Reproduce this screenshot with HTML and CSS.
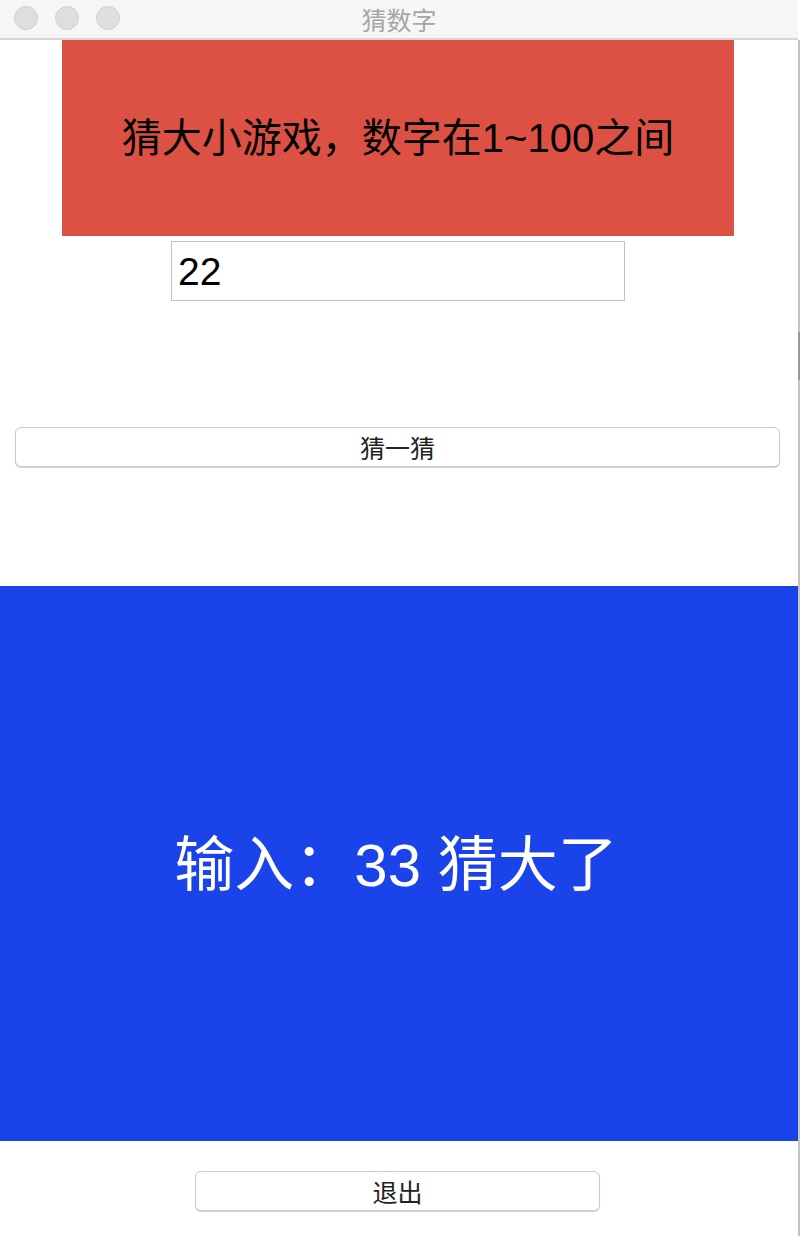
FILE: index.html
```html
<!DOCTYPE html>
<html lang="zh-CN">
<head>
<meta charset="utf-8">
<title>猜数字</title>
<link rel="stylesheet" href="styles.css">
</head>
<body>
<div class="window">
  <header class="titlebar">
    <div class="lights">
      <span class="light"></span>
      <span class="light"></span>
      <span class="light"></span>
    </div>
    <div class="title">猜数字</div>
  </header>
  <main class="content">
    <div class="banner">猜大小游戏，数字在1~100之间</div>
    <input class="guess-input" type="text" value="22">
    <button class="btn btn-guess">猜一猜</button>
    <div class="result">输入：33 猜大了</div>
    <button class="btn btn-quit">退出</button>
    <div class="scroll-thumb"></div>
  </main>
</div>
</body>
</html>
```
FILE: styles.css
```css
html, body {
  margin: 0;
  padding: 0;
  background: #ffffff;
}
body {
  width: 800px;
  height: 1236px;
  overflow: hidden;
  font-family: "Liberation Sans", "Noto Sans CJK SC", sans-serif;
}
.window {
  width: 800px;
  height: 1236px;
  display: flex;
  flex-direction: column;
}
.titlebar {
  height: 38px;
  background: #f6f6f6;
  border-bottom: 2px solid #d6d6d6;
  position: relative;
  display: flex;
  align-items: center;
  justify-content: center;
  margin-right: 2px;
}
.lights {
  position: absolute;
  left: 14px;
  top: 6px;
  display: flex;
  gap: 17px;
}
.light {
  width: 22px;
  height: 22px;
  border-radius: 50%;
  background: #dedede;
  border: 1px solid #d0d0d0;
}
.title {
  font-family: "Noto Sans CJK SC", sans-serif;
  font-size: 25px;
  color: #a6a6a6;
  line-height: 38px;
  margin-top: -1px;
}
.content {
  flex: 1;
  position: relative;
  display: flex;
  flex-direction: column;
  align-items: flex-start;
  border-right: 2px solid #c4c4c4;
}
.banner {
  margin-left: 62px;
  width: 672px;
  height: 196px;
  box-sizing: border-box;
  padding-bottom: 6px;
  background: #dc5143;
  color: #000;
  font-family: "Liberation Sans", "Noto Sans CJK SC", sans-serif;
  font-size: 40px;
  display: flex;
  align-items: center;
  justify-content: center;
}
.guess-input {
  margin: 5px 0 0 171px;
  box-sizing: border-box;
  width: 454px;
  height: 60px;
  border: 1px solid #c2c2c2;
  padding: 2px 6px 0 6px;
  font-family: "Liberation Sans", "Noto Sans CJK SC", sans-serif;
  font-size: 39px;
  color: #000;
  outline: none;
  background: #fff;
}
.btn {
  box-sizing: border-box;
  height: 40px;
  background: #ffffff;
  border: 1px solid #cacaca;
  border-radius: 6px;
  box-shadow: 0 1px 1px rgba(0, 0, 0, 0.18);
  font-family: "Noto Sans CJK SC", "Liberation Sans", sans-serif;
  font-size: 25px;
  color: #222;
  padding: 0;
  line-height: 36px;
}
.btn-guess {
  margin: 126px 0 0 15px;
  width: 765px;
}
.result {
  margin-top: 119px;
  width: 798px;
  height: 555px;
  background: #1a43e9;
  color: #ffffff;
  font-family: "Liberation Sans", "Noto Sans CJK SC", sans-serif;
  font-size: 60px;
  display: flex;
  align-items: center;
  justify-content: center;
  padding: 0 6px 8px 0;
  box-sizing: border-box;
}
.btn-quit {
  margin: 30px 0 0 195px;
  width: 405px;
}
.scroll-thumb {
  position: absolute;
  right: -2px;
  top: 292px;
  width: 2px;
  height: 48px;
  background: #9a9a9a;
}
```
